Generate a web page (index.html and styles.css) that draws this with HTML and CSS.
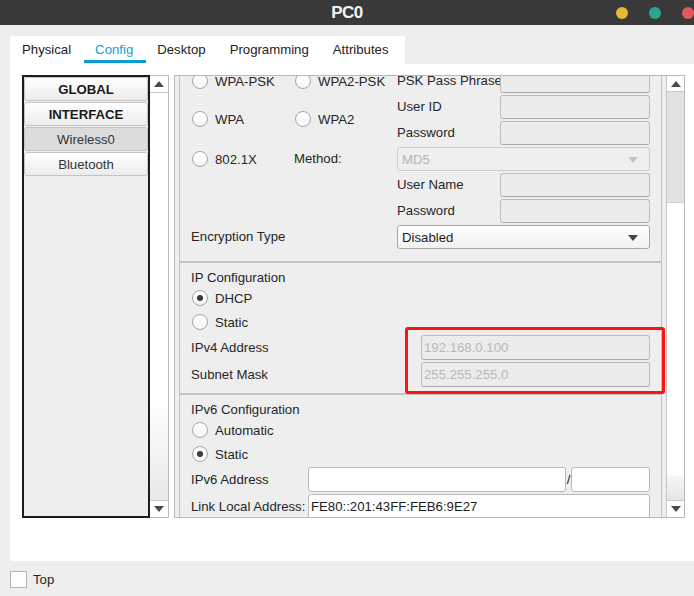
FILE: index.html
```html
<!DOCTYPE html>
<html>
<head>
<meta charset="utf-8">
<title>PC0</title>
<link rel="stylesheet" href="styles.css">
</head>
<body>
<header class="titlebar">
  <div></div>
  <div class="title">PC0</div>
  <div class="lights"><span class="light yellow"></span><span class="light green"></span><span class="light red"></span></div>
</header>
<div class="tabs-wrap">
  <nav class="tabs">
    <span class="tab">Physical</span>
    <span class="tab active">Config</span>
    <span class="tab">Desktop</span>
    <span class="tab">Programming</span>
    <span class="tab">Attributes</span>
  </nav>
</div>
<main class="main">
  <div class="sidebar">
    <div class="list">
      <div class="item bold">GLOBAL</div>
      <div class="item bold">INTERFACE</div>
      <div class="item selected">Wireless0</div>
      <div class="item">Bluetooth</div>
    </div>
    <div class="vscroll left">
      <div class="sbtn up"></div>
      <div class="track"></div>
      <div class="sbtn down"></div>
    </div>
  </div>
  <div class="pane">
    <div class="viewport">
      <div class="content">
        <section class="sec sec-security">
          <label class="radio c1 r1"><span class="dot"></span>WPA-PSK</label>
          <label class="radio c2 r1"><span class="dot"></span>WPA2-PSK</label>
          <span class="lbl c3 r1">PSK Pass Phrase</span>
          <span class="field c4 r1"></span>
          <label class="radio c1 r23"><span class="dot"></span>WPA</label>
          <label class="radio c2 r23"><span class="dot"></span>WPA2</label>
          <span class="lbl c3 r2">User ID</span>
          <span class="field c4 r2"></span>
          <span class="lbl c3 r3">Password</span>
          <span class="field c4 r3"></span>
          <label class="radio c1 r4"><span class="dot"></span>802.1X</label>
          <span class="lbl c2 r4">Method:</span>
          <span class="select disabled c34 r4">MD5<span class="arrow"></span></span>
          <span class="lbl c3 r5">User Name</span>
          <span class="field c4 r5"></span>
          <span class="lbl c3 r6">Password</span>
          <span class="field c4 r6"></span>
          <span class="lbl c12 r7">Encryption Type</span>
          <span class="select c34 r7">Disabled<span class="arrow"></span></span>
        </section>
        <section class="sec sec-ip">
          <div class="sec-title">IP Configuration</div>
          <label class="radio radio-row"><span class="dot on"></span>DHCP</label>
          <label class="radio radio-row"><span class="dot"></span>Static</label>
          <div class="field-row ipv4">
            <span class="lbl">IPv4 Address</span>
            <span class="field ph">192.168.0.100</span>
          </div>
          <div class="field-row ipv4">
            <span class="lbl">Subnet Mask</span>
            <span class="field ph">255.255.255.0</span>
          </div>
          <div class="highlight"></div>
        </section>
        <section class="sec sec-ip">
          <div class="sec-title">IPv6 Configuration</div>
          <label class="radio radio-row"><span class="dot"></span>Automatic</label>
          <label class="radio radio-row"><span class="dot on"></span>Static</label>
          <div class="field-row ipv6">
            <span class="lbl">IPv6 Address</span>
            <span class="field white"></span>
            <span class="slash">/</span>
            <span class="field white"></span>
          </div>
          <div class="field-row link">
            <span class="lbl">Link Local Address:</span>
            <span class="field white val">FE80::201:43FF:FEB6:9E27</span>
          </div>
        </section>
      </div>
    </div>
    <div class="vscroll right">
      <div class="sbtn up"></div>
      <div class="thumb"></div>
      <div class="track"></div>
      <div class="track-end"></div>
      <div class="sbtn down"></div>
    </div>
  </div>
</main>
<footer class="bottom">
  <span class="checkbox"></span>
  <span>Top</span>
</footer>
</body>
</html>
```
FILE: styles.css
```css
* { box-sizing: border-box; }
html, body { margin: 0; }
body {
  width: 694px;
  height: 596px;
  overflow: hidden;
  background: #eeeeee;
  font-family: "Liberation Sans", Arial, sans-serif;
  font-size: 13.2px;
  color: #262626;
}

/* title bar */
.titlebar {
  height: 25px;
  background: #393939;
  display: grid;
  grid-template-columns: 1fr auto 1fr;
  align-items: center;
}
.title {
  color: #f3f3f3;
  font-weight: bold;
  font-size: 17px;
  letter-spacing: -0.5px;
}
.lights {
  display: flex;
  justify-content: flex-end;
  gap: 21px;
}
.light { width: 12px; height: 12px; border-radius: 50%; }
.yellow { background: #e6b833; }
.green { background: #2aa88b; }
.red { background: #e2595c; }

/* tabs */
.tabs-wrap { padding: 11px 0 0 10px; }
.tabs {
  display: flex;
  width: 395px;
  height: 28px;
  background: #ffffff;
}
.tab {
  position: relative;
  display: flex;
  align-items: center;
  padding: 0 12px 1px;
  color: #222;
}
.tab.active { color: #1a9ad7; }
.tab.active::after {
  content: "";
  position: absolute;
  left: 1px;
  right: -1px;
  bottom: 1px;
  height: 3px;
  background: #0b9ad8;
}

/* main panel */
.main {
  margin-left: 10px;
  height: 497px;
  background: #ffffff;
  display: flex;
  gap: 5px;
  padding: 11px 0 0 12px;
}
.sidebar { display: flex; height: 443px; }
.list {
  width: 128px;
  height: 443px;
  border: 2px solid #1d1d1d;
  background: #eeeeee;
}
.item {
  height: 24px;
  margin-bottom: 1px;
  border: 1px solid #c4c4c4;
  border-radius: 3px;
  background: linear-gradient(#ffffff, #ececec);
  display: flex;
  align-items: center;
  justify-content: center;
  color: #333;
}
.item.bold { font-weight: bold; color: #1a1a1a; }
.item.selected { background: #dcdcdc; }

/* scrollbars */
.vscroll {
  display: flex;
  flex-direction: column;
  background: #ffffff;
}
.vscroll.left {
  width: 19px;
  height: 443px;
  border: 1px solid #bdbdbd;
  border-left: 0;
}
.vscroll.right {
  width: 18px;
  border-left: 1px solid #c6c6c6;
}
.sbtn {
  height: 17px;
  display: flex;
  align-items: center;
  justify-content: center;
  background: #ffffff;
}
.sbtn.up { border-bottom: 1px solid #c8c8c8; }
.sbtn.down { border-top: 1px solid #c8c8c8; }
.sbtn.up::before {
  content: "";
  border-left: 5px solid transparent;
  border-right: 5px solid transparent;
  border-bottom: 6px solid #4a4a4a;
}
.sbtn.down::before {
  content: "";
  border-left: 5px solid transparent;
  border-right: 5px solid transparent;
  border-top: 6px solid #4a4a4a;
}
.vscroll.left .track {
  flex: 1;
  background: linear-gradient(#ffffff 75%, #e9e9e9);
}
.vscroll.right .sbtn.up { height: 16px; }
.thumb {
  height: 111px;
  background: #e2e2e2;
  border-bottom: 1px solid #cfcfcf;
}
.vscroll.right .track { flex: 1; background: #ffffff; }
.track-end { height: 24px; background: linear-gradient(#f6f6f6, #e6e6e6); }

/* right pane */
.pane {
  width: 511px;
  height: 443px;
  border: 1px solid #b9b9b9;
  display: flex;
  background: #eeeeee;
}
.viewport {
  width: 491px;
  overflow: hidden;
  padding: 0 4px;
}
.content { margin-top: -8px; }
.sec {
  position: relative;
  border: 1px solid #c2c2c2;
  background: #eeeeee;
  padding: 0 11px;
}

/* security grid */
.sec-security {
  display: grid;
  grid-template-columns: 103px 103px 103px 150px;
  grid-template-rows: repeat(7, 24px);
  row-gap: 2px;
  padding-bottom: 12px;
}
.c1 { grid-column: 1; }
.c2 { grid-column: 2; }
.c3 { grid-column: 3; }
.c4 { grid-column: 4; }
.c12 { grid-column: 1 / 3; }
.c34 { grid-column: 3 / 5; }
.r1 { grid-row: 1; }
.r2 { grid-row: 2; }
.r3 { grid-row: 3; }
.r4 { grid-row: 4; }
.r5 { grid-row: 5; }
.r6 { grid-row: 6; }
.r7 { grid-row: 7; }
.r23 { grid-row: 2 / 4; margin-top: -2px; }

.lbl {
  display: flex;
  align-items: center;
  white-space: nowrap;
  color: #262626;
  padding-bottom: 1px;
}
.radio {
  display: flex;
  align-items: center;
  gap: 7px;
  white-space: nowrap;
}
.dot {
  position: relative;
  width: 16px;
  height: 16px;
  margin-left: 1px;
  border-radius: 50%;
  border: 1px solid #a6a6a6;
  background: linear-gradient(#ffffff, #f5f5f5);
  flex: none;
}
.dot.on::after {
  content: "";
  position: absolute;
  left: 4px;
  top: 4px;
  width: 6px;
  height: 6px;
  border-radius: 50%;
  background: #3a3a3a;
}

.field {
  display: flex;
  align-items: center;
  height: 24px;
  border: 1px solid #bcbcbc;
  border-bottom-color: #a9a9a9;
  border-radius: 3px;
  background: #ececec;
  padding-left: 2px;
}
.field.ph { color: #b8b8b8; }
.field.white { background: #ffffff; border-color: #b9b9b9; }
.field.val { color: #1d1d1d; }

.select {
  position: relative;
  display: flex;
  align-items: center;
  height: 24px;
  padding-left: 4px;
  border: 1px solid #a8a8a8;
  border-radius: 3px;
  background: linear-gradient(#ffffff, #f1f1f1);
  color: #1d1d1d;
}
.select .arrow {
  position: absolute;
  right: 11px;
  top: 9px;
  border-left: 5px solid transparent;
  border-right: 5px solid transparent;
  border-top: 6px solid #444;
}
.select.disabled {
  border-color: #cccccc;
  background: #efefef;
  color: #b4b4b4;
}
.select.disabled .arrow { border-top-color: #c4c4c4; }

/* IP sections */
.sec-ip {
  display: flex;
  flex-direction: column;
  padding: 5px 11px;
}
.sec-title { height: 18px; display: flex; align-items: center; }
.radio-row { height: 24px; }
.field-row {
  height: 27px;
  display: grid;
  align-items: center;
}
.field-row .field { height: 25px; }
.ipv4 { grid-template-columns: 230px 229px; }
.ipv6 { grid-template-columns: 117px 258px 5px 79px; }
.link { grid-template-columns: 117px 342px; }
.slash { text-align: center; color: #222; }

.highlight {
  position: absolute;
  left: 225px;
  top: 64px;
  width: 260px;
  height: 67px;
  border: 3px solid #fb1414;
  border-radius: 3px;
}

/* bottom */
.bottom {
  display: flex;
  align-items: center;
  gap: 6px;
  padding: 10px 0 0 10px;
  color: #262626;
}
.checkbox {
  width: 17px;
  height: 17px;
  background: #ffffff;
  border: 1px solid #b3b3b3;
}
```
